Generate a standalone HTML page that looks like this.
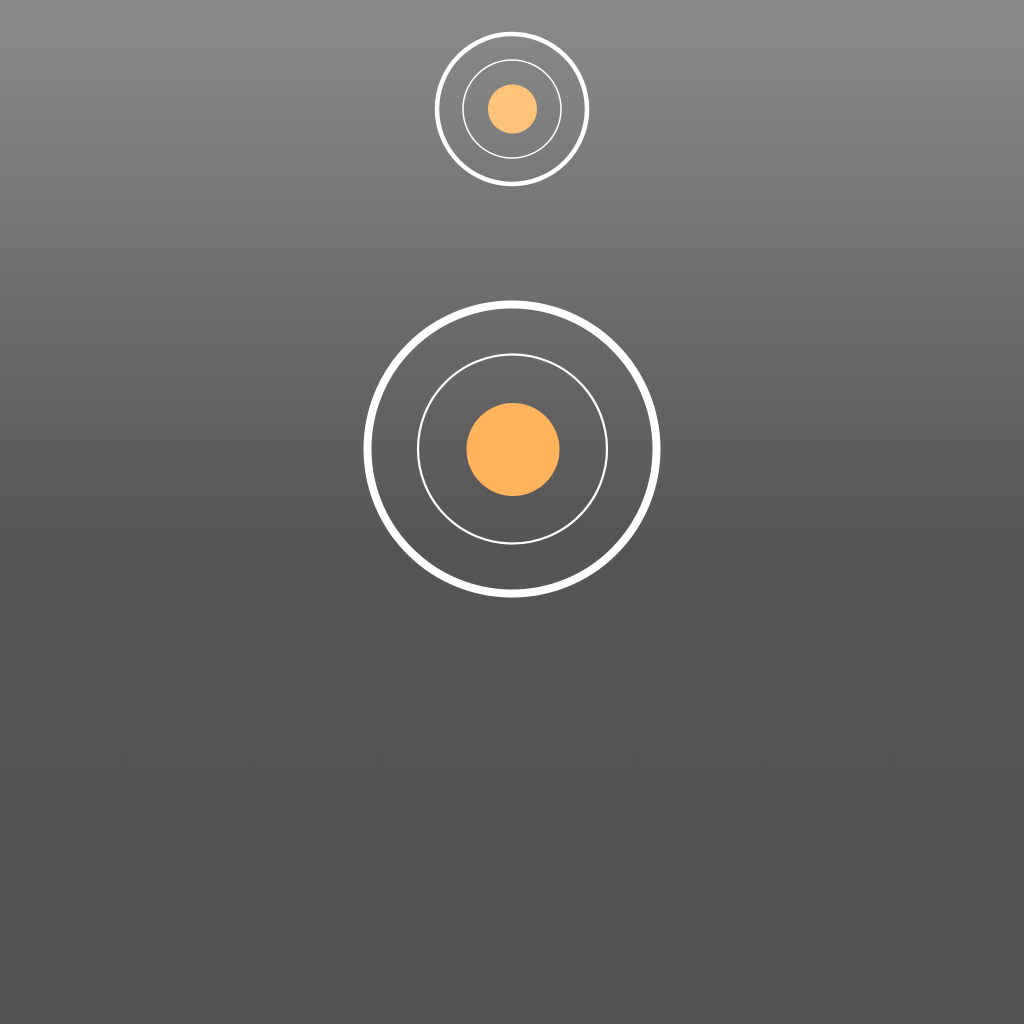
<!DOCTYPE html>
<html><head><style>
html,body{margin:0;padding:0}
body{width:1024px;height:1024px;background:linear-gradient(to bottom,#8b8b8b 0px,#555555 540px,#545454 1024px);overflow:hidden}
</style></head><body>
<svg width="1024" height="1024" style="position:absolute;left:0;top:0">
<circle cx="512" cy="109" r="75" fill="none" stroke="#fff" stroke-width="4.5"/>
<circle cx="512" cy="109" r="49" fill="none" stroke="#fff" stroke-width="1.5"/>
<circle cx="512.5" cy="109" r="24.5" fill="#ffc47a"/>
<circle cx="512" cy="449" r="144.5" fill="none" stroke="#fff" stroke-width="8"/>
<circle cx="512.5" cy="449" r="94.5" fill="none" stroke="#fff" stroke-width="2.2"/>
<circle cx="513" cy="449.5" r="46.5" fill="#ffb45c"/>
</svg>
</body></html>
